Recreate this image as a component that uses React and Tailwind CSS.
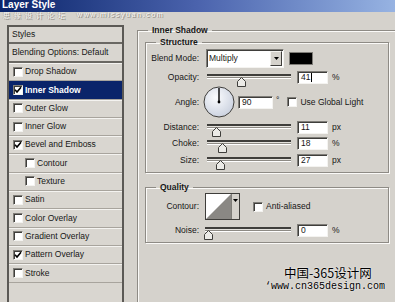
const styles = [
  { label: 'Drop Shadow' },
  { label: 'Inner Shadow', checked: true, active: true },
  { label: 'Outer Glow' },
  { label: 'Inner Glow' },
  { label: 'Bevel and Emboss', checked: true },
  { label: 'Contour', sub: true },
  { label: 'Texture', sub: true },
  { label: 'Satin' },
  { label: 'Color Overlay' },
  { label: 'Gradient Overlay' },
  { label: 'Pattern Overlay', checked: true },
  { label: 'Stroke' },
]

const sunken =
  'bg-white border border-t-[#7f7d78] border-l-[#7f7d78] border-r-[#f4f3f0] border-b-[#f4f3f0] shadow-[inset_1px_1px_0_#3f3e3b]'

const groupBox =
  'border border-[#8e8b85] shadow-[1px_1px_0_#fbfaf8,inset_1px_1px_0_#fbfaf8] p-0 m-0'

function Check({ checked }) {
  return (
    <span className={`w-[10px] h-[10px] shrink-0 flex items-center justify-center ${sunken}`}>
      {checked && (
        <svg width="8" height="8" viewBox="0 0 8 8">
          <polyline points="1,3.8 3,6 7,1.2" fill="none" stroke="#000" strokeWidth="1.6" />
        </svg>
      )}
    </span>
  )
}

function Slider({ pos, width = 84 }) {
  return (
    <div className="relative h-[14px]" style={{ width }}>
      <div className="mt-[8px] h-[4px] border-t-2 border-[#3f3e3b] border-b border-b-[#8e8b85] bg-[#e4e2dd] shadow-[0_1px_0_#fff]" />
      <svg className="absolute top-[3px]" style={{ left: pos - 4 }} width="9" height="10" viewBox="0 0 9 10">
        <path d="M0.5 9.5 V4.5 L4.5 0.5 L8.5 4.5 V9.5 Z" fill="#ecebe7" stroke="#3f3e3b" />
      </svg>
    </div>
  )
}

function Field({ value, w = 31, cursor }) {
  return (
    <div className={`h-[13px] flex items-center pl-[3px] leading-none ${sunken}`} style={{ width: w }}>
      {value}
      {cursor && <span className="ml-[1px] w-[1px] h-[9px] bg-black" />}
    </div>
  )
}

function Label({ children }) {
  return <div className="w-[54px] text-right pr-[1px] shrink-0">{children}</div>
}

function SliderRow({ label, pos, value, unit, cursor, mt }) {
  return (
    <div className={`flex items-center h-[14px] ${mt}`}>
      <Label>{label}</Label>
      <div className="ml-[7px]">
        <Slider pos={pos} />
      </div>
      <div className="ml-[6px]">
        <Field value={value} cursor={cursor} />
      </div>
      <span className="ml-[4px]">{unit}</span>
    </div>
  )
}

function Arrow() {
  return (
    <svg width="5" height="3" viewBox="0 0 5 3">
      <path d="M0 0 H5 L2.5 3 Z" fill="#000" />
    </svg>
  )
}

export default function App() {
  return (
    <div className="relative w-[395px] h-[302px] overflow-hidden bg-[#d5d2cc] text-[8.5px] text-[#161616] font-['Liberation_Sans',Arial,sans-serif]">
      <div className="h-[12px] bg-linear-to-r from-[#0a246a] via-[#4b63ad] to-[#97b3e2] overflow-hidden">
        <div className="pl-[2px] text-white font-bold text-[10px] leading-[10px]">Layer Style</div>
      </div>

      <div className="absolute left-[3px] top-[11px] flex items-center gap-[8px] text-[#f7f6f3] [text-shadow:1px_1px_0_#8f8c86,-1px_0_0_#b5b2ab] leading-[8px]">
        <span className="text-[7px] tracking-[4px] font-['Noto_Sans_CJK_SC',sans-serif]">思缘设计论坛</span>
        <span className="text-[7px] tracking-[1.6px]">www.missyuan.com</span>
      </div>

      <div className="flex items-start mt-[13px] pl-[7px]">
        <div className="w-[117px] h-[290px] shrink-0 border-2 border-[#5b5955] bg-[#d9d6d0]">
          <div className="h-[17px] flex items-center pl-[3px] border-b-2 border-[#6a6863]">Styles</div>
          <div className="h-[19px] flex items-center pl-[3px] border-b-2 border-[#6a6863]">Blending Options: Default</div>
          {styles.map((s) => (
            <div key={s.label}
              className={`h-[18.3px] flex items-center gap-[2px] border-b border-[#a8a49d] ${
                s.sub ? 'pl-[16px]' : 'pl-[4px]'} ${
                s.active ? 'bg-[#0a246a] text-white font-bold' : 'shadow-[inset_0_1px_0_#f4f3f0]'}`}>
              <Check checked={s.checked} />
              <span>{s.label}</span>
            </div>
          ))}
        </div>

        <fieldset className={`ml-[13px] w-[262px] h-[290px] shrink-0 ${groupBox}`}>
          <legend className="ml-[10px] px-[4px] font-bold leading-[11px]">Inner Shadow</legend>
          <div className="pl-[7px]">
            <fieldset className={`mt-[1px] w-[244px] pb-[5px] ${groupBox}`}>
              <legend className="ml-[10px] px-[4px] font-bold leading-[11px]">Structure</legend>

              <div className="flex items-center h-[19px] mt-[1px]">
                <Label>Blend Mode:</Label>
                <div className={`ml-[6px] w-[78px] h-[19px] flex items-center justify-between pl-[2px] pr-[1px] ${sunken}`}>
                  <span>Multiply</span>
                  <span className="w-[12px] h-[15px] bg-[#d5d2cc] flex items-center justify-center border border-t-[#f4f3f0] border-l-[#f4f3f0] border-r-[#3f3e3b] border-b-[#3f3e3b]">
                    <Arrow />
                  </span>
                </div>
                <div className="ml-[5px] w-[24px] h-[13px] bg-black border border-[#7f7d78]" />
              </div>

              <SliderRow label="Opacity:" pos={34} value="41" unit="%" cursor mt="mt-[2px]" />

              <div className="flex items-center h-[30px] mt-[3px]">
                <Label>Angle:</Label>
                <svg className="ml-[3px]" width="32" height="32" viewBox="0 0 32 32">
                  <defs>
                    <radialGradient id="dial" cx="40%" cy="35%" r="70%">
                      <stop offset="0" stopColor="#fbfcfe" />
                      <stop offset="1" stopColor="#c9d0de" />
                    </radialGradient>
                  </defs>
                  <circle cx="16" cy="16" r="15" fill="url(#dial)" stroke="#3f3e3b" />
                  <line x1="16" y1="16" x2="16" y2="2" stroke="#000" strokeWidth="1.4" />
                  <circle cx="16" cy="16" r="1.4" fill="#000" />
                </svg>
                <div className="ml-[3px]">
                  <Field value="90" w={35} />
                </div>
                <span className="ml-[3px] self-start mt-[7px]">°</span>
                <div className="ml-[8px]">
                  <Check />
                </div>
                <span className="ml-[3px]">Use Global Light</span>
              </div>

              <SliderRow label="Distance:" pos={9} value="11" unit="px" mt="mt-[3px]" />
              <SliderRow label="Choke:" pos={15} value="18" unit="%" mt="mt-[2px]" />
              <SliderRow label="Size:" pos={13} value="27" unit="px" mt="mt-[3px]" />
            </fieldset>

            <fieldset className={`mt-[9px] w-[244px] pb-[5px] ${groupBox}`}>
              <legend className="ml-[10px] px-[4px] font-bold leading-[11px]">Quality</legend>

              <div className="flex items-center h-[27px]">
                <Label>Contour:</Label>
                <div className="ml-[5px] flex h-[27px] border border-[#3f3e3b] bg-white">
                  <svg width="25" height="25" viewBox="0 0 25 25">
                    <path d="M0 25 L25 0 V25 Z" fill="#8a8884" />
                  </svg>
                  <div className="w-[8px] bg-[#d5d2cc] border-l border-[#7f7d78] flex justify-center pt-[5px]">
                    <Arrow />
                  </div>
                </div>
                <div className="ml-[13px]">
                  <Check />
                </div>
                <span className="ml-[3px]">Anti-aliased</span>
              </div>

              <div className="flex items-center h-[14px] mt-[3px]">
                <Label>Noise:</Label>
                <div className="ml-[5px]">
                  <Slider pos={3} width={86} />
                </div>
                <div className="ml-[6px]">
                  <Field value="0" />
                </div>
                <span className="ml-[4px]">%</span>
              </div>
            </fieldset>
          </div>
        </fieldset>
      </div>

      <div className="absolute left-[284px] top-[265px] text-[12.5px] leading-[16px] text-black [text-shadow:0_0_2px_#fff] font-['Noto_Sans_CJK_SC',sans-serif]">
        中国-365设计网
      </div>
      <div className="absolute left-[265px] top-[281px] text-[10px] leading-[12px] text-black [text-shadow:0_0_2px_#fff] font-['Liberation_Mono',monospace]">
        ‘www.cn365design.com
      </div>
    </div>
  )
}
